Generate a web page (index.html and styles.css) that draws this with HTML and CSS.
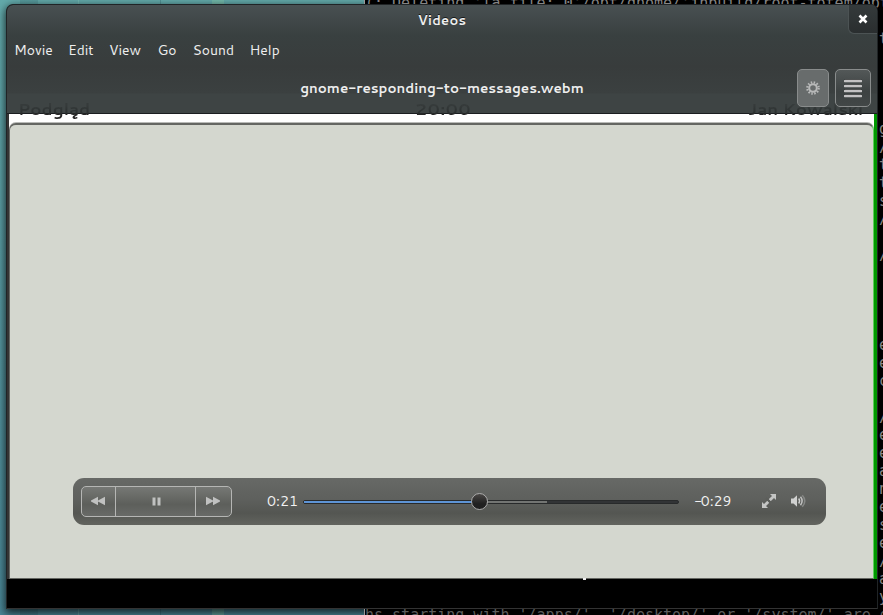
FILE: index.html
```
<!DOCTYPE html>
<html lang="en">
<head>
<meta charset="utf-8">
<title>Videos</title>
<link rel="stylesheet" href="styles.css">
</head>
<body>
<div class="desktop">
<pre class="terminal"><span>(: Deleting 'la file: 0'/opt/gnome/'jhbuild/root-totem/opt</span>
<span></span>
<span class="edge">t</span>
<span></span>
<span></span>
<span></span>
<span></span>
<span class="edge">g</span>
<span class="edge">/</span>
<span class="edge">t</span>
<span class="edge">t</span>
<span class="edge">s</span>
<span class="edge">/</span>
<span></span>
<span class="edge">/</span>
<span></span>
<span></span>
<span></span>
<span></span>
<span class="edge">e</span>
<span class="edge">e</span>
<span class="edge">c</span>
<span></span>
<span class="edge">/</span>
<span class="edge">e</span>
<span class="edge">e</span>
<span class="edge">a</span>
<span class="edge">n</span>
<span class="edge">e</span>
<span class="edge">s</span>
<span class="edge">e</span>
<span class="edge">/</span>
<span class="edge">a</span>
<span class="edge">y</span>
<span class="last">hs starting with '/apps/', '/desktop/' or '/system/' are d</span></pre>
<main class="window">
  <header class="chrome">
    <div class="titlebar"><h1 class="title">Videos</h1>
      <button class="close" aria-label="Close"><svg width="10" height="10" viewBox="0 0 10 10"><path d="M1.5 1.5 8.5 8.5M8.5 1.5 1.5 8.5" stroke="#fff" stroke-width="2.6"/></svg></button>
    </div>
    <nav class="menubar"><span class="movie">Movie</span><span class="edit">Edit</span><span class="view">View</span><span class="go">Go</span><span class="sound">Sound</span><span class="help">Help</span></nav>
    <div class="toolbar">
      <h2 class="filename">gnome-responding-to-messages.webm</h2>
      <button class="tool gear" aria-label="Settings"><svg width="16" height="16" viewBox="0 0 16 16"><circle cx="8" cy="8" r="3.8" fill="none" stroke="#b8b9b9" stroke-width="2"/><circle cx="8" cy="8" r="5.7" fill="none" stroke="#b8b9b9" stroke-width="2.2" stroke-dasharray="1.5 1.484"/></svg></button>
      <button class="tool list" aria-label="Menu"><svg width="18" height="19" viewBox="0 0 18 19"><path d="M1.5 2.5h15M1.5 7.5h15M1.5 12.5h15M1.5 17.5h15" stroke="#282b2b" stroke-width="3" transform="translate(0 -1)" stroke-linecap="round"/><path d="M1.2 2h15.6M1.2 7h15.6M1.2 12h15.6M1.2 17h15.6" stroke="#c3c2c3" stroke-width="2.7" stroke-linecap="round"/></svg></button>
    </div>
    <div class="status"><span class="s-left">Podgląd</span><span class="s-mid">20:00</span><span class="s-right">Jan Kowalski</span></div>
  </header>
  <section class="video">
    <div class="frame">
      <div class="controls">
        <div class="buttons">
          <button class="skip" aria-label="Previous"><svg width="16" height="10" viewBox="0 0 16 10"><path d="M8 .8v8.400L1 5.400v-.8zM15 .8v8.400L8 5.400v-.8z" fill="#c0c1c0"/></svg></button>
          <button class="pause" aria-label="Pause"><svg width="9" height="9" viewBox="0 0 9 9"><path d="M.5.5h3v8h-3zM5.500.5h3v8h-3z" fill="#c0c1c0"/></svg></button>
          <button class="skip" aria-label="Next"><svg width="16" height="10" viewBox="0 0 16 10"><path d="M1 .8v8.400L8 5.400v-.8zM8 .8v8.400L15 5.400v-.8z" fill="#c0c1c0"/></svg></button>
        </div>
        <span class="time elapsed">0:21</span>
        <div class="track"><div class="buffer"></div><div class="played"></div><div class="knob"></div></div>
        <span class="time left"><span class="minus">-</span>0:29</span>
        <svg class="full" width="16" height="16" viewBox="0 0 16 16"><path d="M9 1h6v6l-2-2-3.300 3.300-2-2L11 3zM1 15h6l-2-2 3.300-3.300-2-2L3 11 1 9z" fill="#c4c5c4"/><path d="M5 5l6 6" stroke="#5c5e5b" stroke-width="1.800"/></svg>
        <svg class="volume" width="16" height="14" viewBox="0 0 16 14"><path d="M1 4.500h2.500L7 1.200v11.600L3.500 9.500H1z" fill="#d0d1d0"/><path d="M8.700 4.500q1.800 2.500 0 5" fill="none" stroke="#d0d1d0" stroke-width="1.400"/><path d="M10.500 2.800q3.200 4.200 0 8.400" fill="none" stroke="#c0c1c0" stroke-width="1.500"/><path d="M12.300 1.300q5 5.700 0 11.400" fill="none" stroke="#858785" stroke-width="1.500"/></svg>
      </div>
    </div>
    <i class="speck"></i>
  </section>
</main>
</div>
</body>
</html>
```
FILE: styles.css
```
* { box-sizing: border-box; }
body { margin: 0; }
button { padding: 0; font: inherit; }
h1, h2 { margin: 0; }
.desktop {
  position: relative;
  width: 883px;
  height: 615px;
  overflow: hidden;
  font-family: Cantarell, "Noto Sans", sans-serif;
  background:
    linear-gradient(90deg, transparent 20px, #0c333b22 20px 38px, transparent 38px 78px, #9ee2c444 78px 79px, transparent 79px 160px, #0c333b33 160px 161px, transparent 161px 212px, #9ee2a544 212px 224px, transparent 224px),
    linear-gradient(#63aaab, #4a8797);
}
.terminal {
  position: absolute;
  left: 364px;
  top: -6px;
  width: 519px;
  height: 621px;
  margin: 0;
  border-left: 1px solid #999;
  background: #000;
  color: #858585;
  font: 200 15px/18px "DejaVu Sans Mono", monospace;
}
.terminal .edge { margin-left: 514px; }
.terminal .last { color: #5c5c5c; }
.window {
  position: absolute;
  left: 6px;
  top: 4px;
  width: 872px;
  height: 605px;
  border: 1px solid #202426;
  border-bottom-color: #333;
  border-radius: 7px 7px 0 0;
  background: #000;
  overflow: hidden;
}
.desktop::before {
  content: "";
  position: absolute;
  left: 6px;
  top: 4px;
  width: 872px;
  height: 605px;
  border-radius: 7px 7px 0 0;
  box-shadow: 0 3px 9px 1px #000b;
}
.chrome {
  position: relative;
  z-index: 1;
  height: 109px;
  border-bottom: 1px solid #1a1d20;
  background: linear-gradient(#485052, #394040 30px, #383c3c 62px, #3b4040 88px, #3e4444 89px);
  color: #eee;
}
.titlebar { position: relative; height: 29px; display: flex; justify-content: center; }
.title { font-size: 13px; line-height: 30px; font-weight: 600; letter-spacing: .3px; text-shadow: 0 -1px #16191a; }
.close {
  position: absolute;
  right: 0;
  top: 0;
  width: 29px;
  height: 29px;
  border: solid #4c5354;
  border-width: 0 0 1px 1px;
  border-radius: 0 0 0 6px;
  background: linear-gradient(#343a3b, #2a2e2f);
}
.close svg { display: block; margin: 9px auto 10px; }
.menubar { display: flex; height: 34px; padding-left: 7px; font-size: 13.9px; line-height: 32px; white-space: nowrap; }
.menubar span { flex: none; }
.movie { width: 54px; }
.edit { width: 41px; }
.view { width: 48.5px; }
.go { width: 35px; }
.sound { width: 57px; }
.toolbar { position: relative; z-index: 1; display: flex; align-items: center; height: 40px; padding-right: 6px; gap: 6px; }
.filename { flex: 1; padding-left: 86px; text-align: center; font-size: 13.5px; line-height: 38px; font-weight: 700; }
.tool { display: grid; place-items: center; height: 38px; border: 1px solid #898c8c; border-radius: 5px; }
.gear { width: 32px; background: #686c6c; }
.list { width: 36px; background: linear-gradient(#535858, #3d4242 60%, #424747); }
.status { position: absolute; left: 0; right: 0; top: 92px; height: 24px; font-size: 16.8px; line-height: 24px; font-weight: 700; filter: blur(.7px); }
.status span {
  position: absolute;
  top: 0;
  white-space: nowrap;
  color: transparent;
  background: linear-gradient(#363b3b 8px, #2b3030 16px, #262626 17px);
  background-clip: text;
}
.s-left { left: 11px; }
.s-mid { left: 408px; letter-spacing: .7px; }
.s-right { left: 741px; }
.video {
  position: relative;
  height: 465px;
  padding-top: 9px;
  border-left: 2px solid #343434;
  border-right: 3px solid #009800;
  background: #fff;
}
.frame {
  display: flex;
  height: 456px;
  padding: 353px 0 0 63px;
  border: 2px solid #646662;
  border-left-width: 1px;
  border-right: 1px solid #5ecc5e;
  border-bottom-width: 1px;
  border-radius: 7px 7px 0 0;
  background: #d4d7cf;
  box-shadow: 0 -1px #b9bab8;
}
.controls {
  display: flex;
  align-items: center;
  width: 753px;
  height: 47px;
  padding-left: 8px;
  border-radius: 11px;
  background: linear-gradient(#676966, #5e605d 45%, #545652 75%, #62645f);
}
.buttons { display: flex; width: 151px; height: 31px; border: 1px solid #b5b6b4; border-radius: 5px; background: linear-gradient(#767875, #5d5f5b 60%, #686a67); }
.buttons button { display: grid; place-items: center; border: 0; background: none; }
.buttons .skip { width: 33px; padding: 0 1px 1px 0; }
.buttons .pause { width: 81px; padding: 0 0 1px 2px; border: solid #b5b6b4; border-width: 0 1px; }
.buttons .skip:last-child { width: 35px; }
.time { margin-top: -1px; font-size: 14.2px; line-height: 20px; color: #f2f2f2; white-space: nowrap; }
.elapsed { width: 36px; margin-left: 35px; }
.track { position: relative; width: 376px; height: 4px; margin: 1px 1px 0 0; border: 1px solid #282a2b; border-radius: 2px; background: #323436; }
.buffer, .played { position: absolute; left: 0; top: 0; height: 2px; }
.buffer { width: 243px; background: #737573; }
.played { width: 176px; background: #5e94d5; }
.knob { position: absolute; left: 167px; top: -8px; width: 17px; height: 17px; border: 1px solid #aaa; border-radius: 50%; background: linear-gradient(#4a4846, #202020 65%); }
.left { width: 54px; margin-left: 14px; font-size: 14px; }
.minus { display: inline-block; margin-right: -1.5px; }
.full { margin-left: 13px; margin-top: -1px; }
.volume { margin-left: 13px; margin-top: -1px; }
.speck { position: absolute; left: 574px; bottom: -1px; width: 3px; height: 2px; background: #eee; }
```
